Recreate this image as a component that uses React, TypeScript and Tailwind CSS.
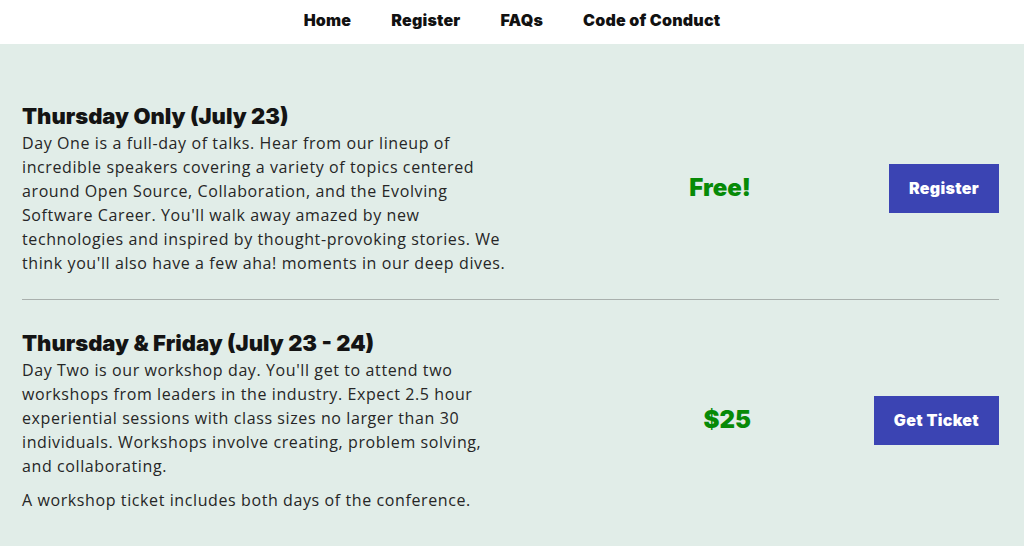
const heading = "font-['Inter',sans-serif]";
const body = "font-['Open_Sans',sans-serif]";

const navLinks = ['Home', 'Register', 'FAQs', 'Code of Conduct'];

function Nav() {
  return (
    <nav className="flex h-[44px] items-center justify-center bg-white pb-[4px]">
      <ul className={`flex gap-10 text-[16px] font-black tracking-[0.2px] text-[#111] ${heading}`}>
        {navLinks.map((link) => (
          <li key={link}>
            <a href="#">{link}</a>
          </li>
        ))}
      </ul>
    </nav>
  );
}

type TicketProps = {
  title: string;
  paragraphs: string[];
  price: string;
  action: string;
  last?: boolean;
};

function TicketRow({ title, paragraphs, price, action, last }: TicketProps) {
  return (
    <section
      className={`grid grid-cols-[492px_1fr_248px] items-center ${
        last ? 'pt-[28px]' : 'border-b border-[#a9b0ad] pb-[24px]'
      }`}
    >
      <div>
        <h2 className={`text-[22px] leading-[30px] font-black text-[#141414] ${heading}`}>
          {title}
        </h2>
        {paragraphs.map((p, i) => (
          <p
            key={i}
            className={`text-[16px] leading-[24px] tracking-[0.6px] text-[#262626] ${body} ${i > 0 ? 'mt-[10px]' : ''}`}
          >
            {p}
          </p>
        ))}
      </div>
      <p className={`justify-self-end text-[24px] font-black text-[#078a07] ${heading}`}>
        {price}
      </p>
      <div className="flex justify-end">
        <a
          href="#"
          className={`flex h-[49px] items-center bg-[#3b44b3] px-5 text-[16px] font-black tracking-[0.3px] text-white ${heading}`}
        >
          {action}
        </a>
      </div>
    </section>
  );
}

export default function App() {
  return (
    <div className="min-h-[546px] bg-[#e1ede8]">
      <Nav />
      <main className="pl-[22px] pr-[25px] pt-[57px]">
        <TicketRow
          title="Thursday Only (July 23)"
          paragraphs={[
            "Day One is a full-day of talks. Hear from our lineup of incredible speakers covering a variety of topics centered around Open Source, Collaboration, and the Evolving Software Career. You'll walk away amazed by new technologies and inspired by thought-provoking stories. We think you'll also have a few aha! moments in our deep dives.",
          ]}
          price="Free!"
          action="Register"
        />
        <TicketRow
          title="Thursday & Friday (July 23 - 24)"
          paragraphs={[
            "Day Two is our workshop day. You'll get to attend two workshops from leaders in the industry. Expect 2.5 hour experiential sessions with class sizes no larger than 30 individuals. Workshops involve creating, problem solving, and collaborating.",
            'A workshop ticket includes both days of the conference.',
          ]}
          price="$25"
          action="Get Ticket"
          last
        />
      </main>
    </div>
  );
}
